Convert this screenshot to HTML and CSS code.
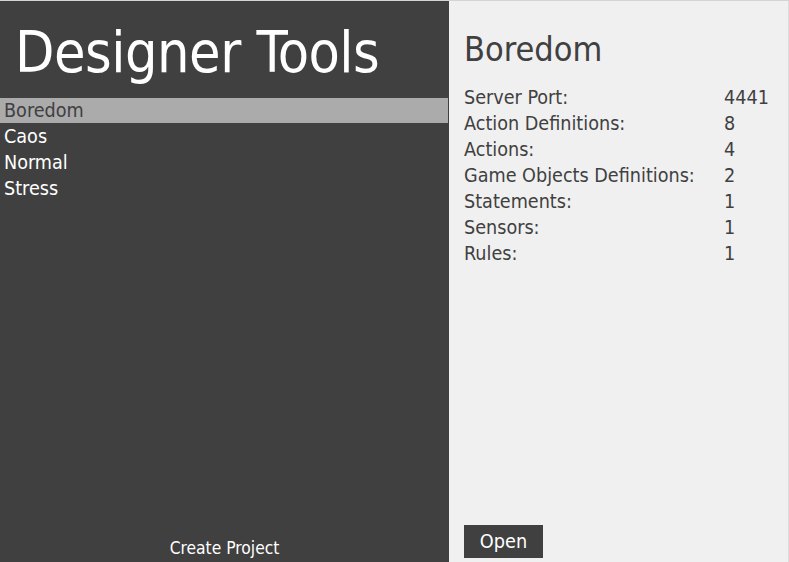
FILE: index.html
```html
<!DOCTYPE html>
<html>
<head>
<meta charset="utf-8">
<link rel="stylesheet" href="styles.css">
</head>
<body>
<div class="app">
  <div class="left">
    <h1 class="title">Designer Tools</h1>
    <ul class="list">
      <li class="item selected">Boredom</li>
      <li class="item">Caos</li>
      <li class="item">Normal</li>
      <li class="item">Stress</li>
    </ul>
    <div class="create">Create Project</div>
  </div>
  <div class="right">
    <h2 class="name">Boredom</h2>
    <div class="stats">
      <span class="label">Server Port:</span><span class="value">4441</span>
      <span class="label">Action Definitions:</span><span class="value">8</span>
      <span class="label">Actions:</span><span class="value">4</span>
      <span class="label">Game Objects Definitions:</span><span class="value">2</span>
      <span class="label">Statements:</span><span class="value">1</span>
      <span class="label">Sensors:</span><span class="value">1</span>
      <span class="label">Rules:</span><span class="value">1</span>
    </div>
    <div class="spacer"></div>
    <div class="actions"><button class="open">Open</button></div>
  </div>
</div>
</body>
</html>
```
FILE: styles.css
```css
html, body {
  margin: 0;
  padding: 0;
  height: 100%;
  overflow: hidden;
}
body {
  font-family: "DejaVu Sans Condensed", "DejaVu Sans", sans-serif;
  background: #f0f0f0;
}
.app {
  display: flex;
  height: 562px;
  border-top: 1px solid #d4d4d4;
  box-sizing: border-box;
}
.left {
  width: 449px;
  background: #404040;
  display: flex;
  flex-direction: column;
  color: #fff;
}
.title {
  margin: 0;
  padding: 16px 0 0 15px;
  height: 80px;
  box-sizing: border-box;
  font-weight: normal;
  font-size: 57px;
  line-height: 70px;
  letter-spacing: -0.5px;
}
.list {
  list-style: none;
  margin: 17px 0 0 0;
  padding: 0;
  flex: 1;
}
.item {
  height: 26px;
  line-height: 25px;
  font-size: 19.6px;
  padding-left: 4px;
  width: 444px;
}
.item.selected {
  background: #ababab;
  color: #404040;
  height: 25px;
  margin-bottom: 1px;
}
.create {
  text-align: center;
  font-size: 17.3px;
  height: 28px;
  line-height: 28px;
}
.right {
  flex: 1;
  display: flex;
  flex-direction: column;
  padding: 0 0 0 15px;
  color: #404040;
  border-right: 1px solid #dcdcdc;
}
.name {
  margin: 0;
  padding-top: 29px;
  font-weight: normal;
  font-size: 34px;
  line-height: 38px;
  height: 84px;
  box-sizing: border-box;
}
.stats {
  display: grid;
  grid-template-columns: 260px auto;
  grid-auto-rows: 26px;
  font-size: 19.6px;
  line-height: 26px;
}
.spacer { flex: 1; }
.actions {
  padding-bottom: 4px;
}
.open {
  width: 79px;
  height: 33px;
  background: #404040;
  color: #fff;
  border: none;
  font-family: inherit;
  font-size: 19.7px;
  padding: 0;
}
```
